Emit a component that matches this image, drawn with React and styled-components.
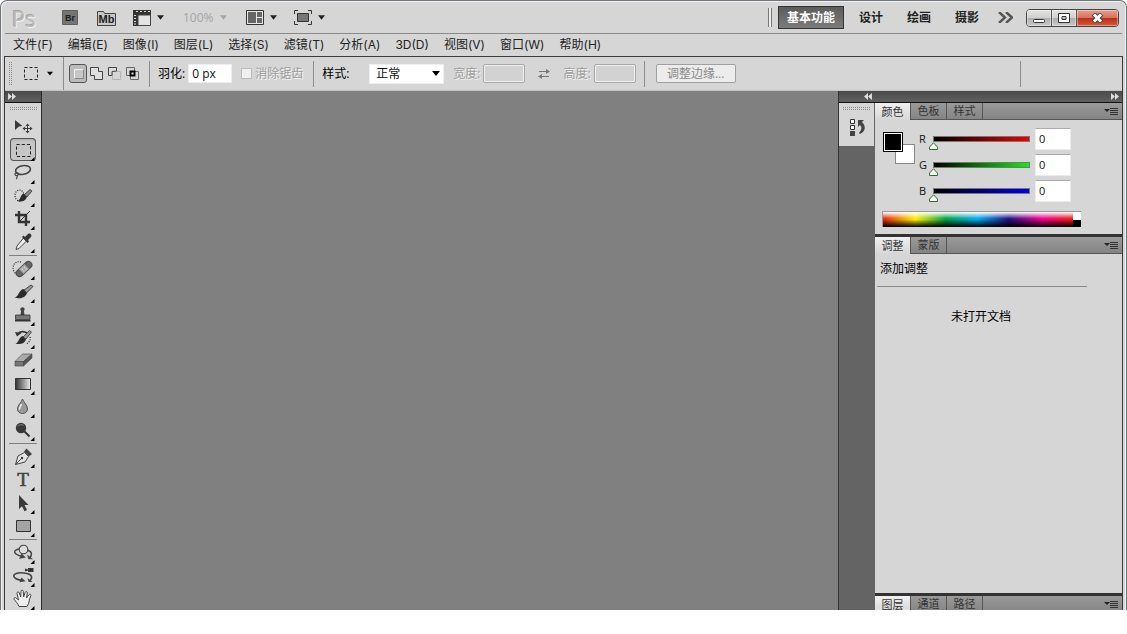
import React, { useState } from 'react';
import styled, { createGlobalStyle, css } from 'styled-components';

const GlobalStyle = createGlobalStyle`
  *, *::before, *::after {
    box-sizing: border-box;
  }
  body {
    margin: 0;
    background: #fff;
    color: #111;
    font-family: "Open Sans", "Noto Sans CJK SC", sans-serif;
    font-size: 12px;
    line-height: 16px;
  }
  button, input, select {
    font: inherit;
    color: inherit;
  }
`;

/* ---------- window frame ---------- */

const Window = styled.div`
  display: flex;
  flex-direction: column;
  height: calc(100vh - 24px);
  overflow: hidden;
  padding: 1px 3px 0;
  background: #d6d6d6;
  border: 1px solid #70747c;
  border-bottom: 0;
  border-radius: 7px 7px 0 0;
  box-shadow: inset 1px 1px 0 #f0f0f0, inset -1px 0 0 #f0f0f0;
`;

const AppBar = styled.header`
  display: flex;
  align-items: center;
  flex: none;
  height: 32px;
  margin: 0 1px;
  padding: 0 3px 0 7px;
  border-bottom: 1px solid #8a8a8a;
`;

const Logo = styled.span`
  width: 50px;
  color: #bcbcbc;
  font-size: 22px;
  line-height: 28px;
  text-shadow: 1px 1px 0 #f2f2f2, -1px -1px 0 #a4a4a4;
`;

const BarButton = styled.button`
  display: flex;
  align-items: center;
  gap: 6px;
  margin: 0 ${(p) => p.$space || 18}px 0 0;
  padding: 0;
  border: 0;
  background: none;
  color: ${(p) => (p.disabled ? '#a4a4a4' : '#333')};
`;

const Spacer = styled.div`
  flex: 1;
`;

const DoubleRule = styled.span`
  width: 4px;
  height: 19px;
  margin-right: 6px;
  border: 1px solid #777;
  border-width: 0 1px;
  background: #eee;
`;

const Workspaces = styled.div`
  display: flex;
  gap: 6px;
  margin-right: 10px;
`;

const Workspace = styled.button`
  height: 23px;
  padding: 0 8px;
  border: 1px solid transparent;
  background: none;
  color: #222;
  font-weight: bold;
  ${(p) => p.$active && css`
    border-color: #333;
    background: linear-gradient(#5c5c5c, #7c7c7c);
    color: #fff;
  `}
`;

const WindowControls = styled.div`
  display: flex;
  height: 18px;
  margin-left: 12px;
  border: 1px solid #444;
  border-radius: 4px;
  overflow: hidden;
`;

const ControlButton = styled.button`
  display: grid;
  place-items: center;
  width: ${(p) => (p.$close ? 41 : 25)}px;
  padding: 0;
  border: 0;
  border-right: ${(p) => (p.$close ? 0 : '1px solid #555')};
  background: ${(p) => (p.$close
    ? 'linear-gradient(#e6a08c 0%, #d8725a 48%, #bc3018 52%, #d4583a 100%)'
    : 'linear-gradient(#e4e4e4 0%, #cfcfcf 48%, #aeaeae 52%, #c8c8c8 100%)')};
  box-shadow: inset 0 0 0 1px rgba(255, 255, 255, 0.4);
`;

const MenuBar = styled.nav`
  display: flex;
  align-items: center;
  flex: none;
  gap: 15px;
  height: 22px;
  padding: 0 9px;
  font-family: Inter, "Noto Sans CJK SC", sans-serif;
`;

const MenuLink = styled.a`
  color: #222;
  text-decoration: none;
  white-space: nowrap;
`;

const Main = styled.div`
  display: flex;
  flex-direction: column;
  flex: 1;
  min-height: 0;
  border: 1px solid #3c3c3c;
  border-bottom: 0;
`;

/* ---------- options bar ---------- */

const OptionsBar = styled.div`
  display: flex;
  align-items: center;
  flex: none;
  height: 34px;
  padding-left: 4px;
  border-bottom: 1px solid #c4c4c4;
  white-space: nowrap;
`;

const Grip = styled.span`
  flex: none;
  background:
    repeating-linear-gradient(90deg, transparent 0 1px, #d6d6d6 1px 2px),
    repeating-linear-gradient(#8c8c8c 0 1px, #d6d6d6 1px 2px);
  ${(p) => (p.$vertical
    ? 'width: 3px; height: 23px; margin-right: 11px;'
    : 'width: 27px; height: 3px; margin: 4px auto 5px;')}
`;

const PresetButton = styled(BarButton)`
  gap: 8px;
  margin-right: 10px;
`;

const Rule = styled.span`
  flex: none;
  width: 1px;
  height: ${(p) => (p.$full ? 33 : 26)}px;
  margin: 0 ${(p) => p.$after || 8}px 0 0;
  background: #8c8c8c;
`;

const ModeGroup = styled.div`
  display: flex;
  align-items: center;
  margin-right: 8px;
`;

const ModeButton = styled.button`
  display: grid;
  place-items: center;
  width: 18px;
  height: 19px;
  padding: 0;
  border: 1px solid ${(p) => (p.$active ? '#555' : 'transparent')};
  border-radius: 3px;
  background: ${(p) => (p.$active ? '#bcbcbc' : 'none')};
`;

const FieldLabel = styled.label`
  margin-right: ${(p) => p.$after || 3}px;
  color: ${(p) => (p.$off ? '#9c9c9c' : '#000')};
  text-shadow: ${(p) => (p.$off ? '1px 1px 0 #f4f4f4' : 'none')};
`;

const Field = styled.input`
  width: ${(p) => p.$width || 44}px;
  height: 19px;
  margin: 0 ${(p) => p.$after || 0}px 0 0;
  padding: 0 3px;
  border: 1px solid #eee;
  background: #fff;
  &:disabled {
    border-color: #a8a8a8;
    border-radius: 2px;
    background: #d2d2d2;
    box-shadow: inset 0 0 0 1px #f0f0f0;
  }
`;

const Check = styled.input`
  appearance: none;
  width: 11px;
  height: 11px;
  margin: 0 3px 0 0;
  border: 1px solid #bbb;
  background: #f0f0f0;
`;

const SelectBox = styled.span`
  position: relative;
  display: flex;
  align-items: center;
  margin-right: 9px;
  svg {
    position: absolute;
    right: 4px;
    pointer-events: none;
  }
`;

const Select = styled.select`
  appearance: none;
  width: 75px;
  height: 20px;
  padding: 0 6px;
  border: 1px solid #eee;
  border-radius: 0;
  background: #fff;
`;

const SwapButton = styled(BarButton)`
  margin: 0 13px;
`;

const RefineButton = styled.button`
  width: 80px;
  height: 19px;
  padding: 0;
  border: 1px solid #a0a0a0;
  border-radius: 2px;
  background: #ececec;
  color: #8a8a8a;
  line-height: 16px;
`;

/* ---------- body ---------- */

const Body = styled.div`
  display: flex;
  flex: 1;
  min-height: 0;
`;

const DarkStrip = styled.div`
  display: flex;
  align-items: center;
  flex: none;
  height: 12px;
  padding: 0 3px;
  border-bottom: 1px solid #111;
  background: linear-gradient(#4a4a4a, #606060);
`;

const Toolbox = styled.aside`
  display: flex;
  flex-direction: column;
  flex: none;
  width: 37px;
  border-right: 1px solid #2c2c2c;
  overflow: hidden;
`;

const ToolButton = styled.button`
  position: relative;
  flex: none;
  width: 26px;
  height: 23px;
  margin: 0 auto;
  padding: 0;
  border: 0;
  border-radius: 4px;
  background: none;
  color: #3a3a3a;
  ${(p) => p.$active && css`
    background: #c6c6c6;
    box-shadow: inset 0 0 0 1px #555, inset 0 2px 2px #aaa;
  `}
  svg {
    display: block;
  }
`;

const ToolRule = styled.hr`
  flex: none;
  width: 28px;
  height: 1px;
  margin: 2px auto 1px;
  border: 0;
  background: #808080;
`;

const Canvas = styled.main`
  flex: 1;
  background: #808080;
`;

const Dock = styled.aside`
  display: flex;
  flex-direction: column;
  flex: none;
  width: 284px;
  border-left: 1px solid #333;
`;

const DockStrip = styled(DarkStrip)`
  justify-content: space-between;
  padding-left: 25px;
`;

const DockBody = styled.div`
  display: flex;
  flex: 1;
  min-height: 0;
`;

const IconColumn = styled.div`
  flex: none;
  width: 36px;
  padding-right: 1px;
  background: #646464;
`;

const IconTile = styled.div`
  display: flex;
  flex-direction: column;
  align-items: center;
  gap: 4px;
  height: 43px;
  background: #d6d6d6;
  button {
    margin: 0;
  }
`;

const Panels = styled.div`
  display: flex;
  flex-direction: column;
  flex: 1;
  min-width: 0;
  gap: 3px;
  background: #333;
  overflow: hidden;
`;

const Panel = styled.section`
  flex: ${(p) => (p.$grow ? 1 : 'none')};
  height: ${(p) => (p.$height ? `${p.$height}px` : 'auto')};
  min-height: 0;
  overflow: hidden;
  background: #d6d6d6;
`;

const Tabs = styled.div`
  display: flex;
  height: 17px;
  border-bottom: 1px solid #555;
  background: linear-gradient(#9a9a9a, #848484);
`;

const Tab = styled.button`
  width: 36px;
  height: ${(p) => (p.$active ? 17 : 16)}px;
  padding: 0;
  border: 0;
  border-right: 1px solid #555;
  background: ${(p) => (p.$active ? 'linear-gradient(#f0f0f0, #d6d6d6)' : 'none')};
  color: #333;
  font-size: 11px;
  line-height: 16px;
`;

const PanelMenu = styled.button`
  display: flex;
  align-items: center;
  margin-left: auto;
  padding: 0 3px 0 0;
  border: 0;
  background: none;
`;

const ColorBody = styled.div`
  display: grid;
  grid-template-columns: 32px 1fr;
  column-gap: 4px;
  padding: 8px 41px 0 8px;
`;

const Swatches = styled.div`
  position: relative;
  width: 32px;
  height: 32px;
  margin-top: 4px;
`;

const Swatch = styled.button`
  position: absolute;
  width: 20px;
  height: 20px;
  padding: 0;
  ${(p) => (p.$front
    ? 'top: 0; left: 0; background: #000; border: 1px solid #000; box-shadow: inset 0 0 0 1px #fff;'
    : 'right: 0; bottom: 0; background: #fff; border: 1px solid #888;')}
`;

const Channels = styled.div`
  display: flex;
  flex-direction: column;
  gap: 4px;
`;

const Channel = styled.div`
  display: grid;
  grid-template-columns: 10px 105px 36px;
  align-items: center;
  justify-content: start;
  height: 22px;
  label {
    font-size: 11px;
    line-height: 22px;
  }
`;

const thumb = "url(\"data:image/svg+xml,%3Csvg xmlns='http://www.w3.org/2000/svg' width='9' height='8'%3E%3Cpath d='M4.5 .8L8.400 5V7.500H.6V5z' fill='white' stroke='%23287028'/%3E%3C/svg%3E\")";

const Range = styled.input`
  appearance: none;
  width: 105px;
  height: 22px;
  margin: 0;
  background:
    linear-gradient(to right, #000, ${(p) => p.$color}) 5px 9px / 95px 4px no-repeat,
    linear-gradient(#777, #777) 4px 8px / 97px 6px no-repeat;
  &::-webkit-slider-runnable-track {
    height: 22px;
  }
  &::-webkit-slider-thumb {
    appearance: none;
    width: 9px;
    height: 8px;
    margin-top: 14px;
    background: ${thumb};
  }
`;

const ChannelValue = styled.input`
  width: 36px;
  height: 22px;
  margin-left: 1px;
  padding: 0 3px 2px;
  border: 1px solid #ececec;
  border-top-color: #aaa;
  background: #fff;
  font-size: 11px;
`;

const Spectrum = styled.div`
  display: grid;
  grid-template-columns: 1fr 8px;
  height: 16px;
  margin: 9px 41px 0 7px;
  border: 1px solid #999;
  border-width: 1px 0 0 1px;
`;

const Hues = styled.div`
  background:
    linear-gradient(#fff 0%, rgba(255, 255, 255, 0) 45%, rgba(0, 0, 0, 0) 50%, #000 100%),
    linear-gradient(to right, #e02010, #fff000 17%, #00a040 33%, #00a8f0 50%, #201080 66%, #f00088 84%, #e82010);
`;

const BlackWhite = styled.div`
  background: linear-gradient(#fff 50%, #000 50%);
`;

const AdjustTitle = styled.h2`
  margin: 0 35px 0 2px;
  padding: 6px 3px 9px;
  border-bottom: 1px solid #8a8a8a;
  color: #000;
  font-size: 12px;
  font-weight: normal;
  line-height: 17px;
`;

const EmptyNote = styled.p`
  margin: 22px 35px 0 0;
  color: #000;
  text-align: center;
`;

/* ---------- drawings ---------- */

const Caret = ({ color = '#222', size = 7 }) => (
  <svg width={size} height="5" viewBox="0 0 8 5"><path d="M0 0h8L4 5z" fill={color} /></svg>
);

const Chevrons = ({ left }) => (
  <svg width="8" height="7" viewBox="0 0 8 7">
    <path d={left ? 'M4 0v7L0 3.5zM8 0v7L4 3.5z' : 'M0 0v7l4-3.5zM4 0v7l4-3.5z'} fill="#ddd" />
  </svg>
);

const AppBadge = ({ text, folder }) => (
  <svg width={folder ? 19 : 16} height="16">
    {folder
      ? <path d="M.5 1.500h6l1 2h11v12H.5z" fill="#c8c8c8" stroke="#444" />
      : <path d="M.5.5h15v14H.5z" fill="#757575" stroke="#606060" />}
    <text x={folder ? 9.5 : 8} y={folder ? 13 : 11} textAnchor="middle" fontFamily="Liberation Sans" fontWeight="bold" fontSize={folder ? 11 : 9} fill="#1c1c1c">{text}</text>
  </svg>
);

const FilmIcon = () => (
  <svg width="18" height="16">
    <path d="M0 0h18v5H5v11H0z" fill="#333" />
    <path d="M5 5h12.500v10.500H5z" fill="#e4e4e4" stroke="#444" />
    <path d="M3 1.500h2M7 1.500h2M11 1.500h2M15 1.500h2M1 5.500h2M1 8.500h2M1 11.500h2M1 14h2" stroke="#ddd" />
  </svg>
);

const ArrangeIcon = () => (
  <svg width="18" height="16">
    <path d="M.5.5h17v14H.5z" fill="#e8e8e8" stroke="#333" />
    <path d="M2 2h8v11H2zM11 2h5v5h-5zM11 8h5v5h-5z" fill="#666" />
  </svg>
);

const ScreenIcon = () => (
  <svg width="18" height="16">
    <path d="M.5 4V.5H4M14 .5h3.500V4M17.500 11v3.500H14M4 14.500H.5V11" fill="none" stroke="#333" />
    <path d="M3.500 3.500h11v8h-11z" fill="#777" stroke="#333" />
  </svg>
);

const SwapIcon = () => (
  <svg width="12" height="12">
    <path d="M1 3.500h8M11 8.500H3" stroke="#777" />
    <path d="M8 1l4 2.500L8 6zM4 6L0 8.500 4 11z" fill="#777" />
  </svg>
);

const MenuIcon = () => (
  <svg width="15" height="9">
    <path d="M0 2h6L3 5z" fill="#222" />
    <path d="M6 1.500h8M6 3.500h8M6 5.500h8M6 7.500h8" stroke="#333" />
  </svg>
);

const HistoryPanelIcon = () => (
  <svg width="16" height="18">
    <path d="M1.500.5h4v4h-4zM1.500 6.500h4v4h-4z" fill="#fff" stroke="#333" />
    <path d="M1 12h5v5H1z" fill="#444" />
    <path d="M9 1h6l-2 2c4 4 4 9-2 12l-1-1c3-4 3-6 1-8L9 8z" fill="#444" />
  </svg>
);

const modes = [
  <g key="n"><path d="M2 2h9v9H2z" fill="#f0f0f0" /><path d="M3 3h9v9H3z" fill="#888" /><path d="M3 3h8v8H3z" fill="#c8c8c8" /></g>,
  <path key="a" d="M.5.5h8v4h4v8h-8v-4h-4z" fill="#e0e0e0" stroke="#444" />,
  <g key="s" fill="none"><path d="M4.500 4.500h8v8h-8z" stroke="#b4b4b4" /><path d="M8.500 4V.5h-8v8H4V4.500z" fill="#ddd" stroke="#444" /></g>,
  <g key="i" fill="none" stroke="#666"><path d="M.5.5h8v8h-8zM4.500 4.500h8v8h-8z" /><path d="M4.500 4.500h4v4h-4z" stroke="#000" strokeWidth="2" fill="#ddd" /></g>
];

const dotted = { fill: 'none', stroke: '#222', strokeWidth: 1.2, strokeDasharray: '1 1.3' };

const drawings = {
  move: (
    <g>
      <path d="M5 5l7.500 6-3.500.5L5 15z" fill="currentColor" />
      <path d="M17.500 9v9M13 13.500h9" stroke="currentColor" />
      <path d="M17.500 8.500l-2 2.500h4zM17.500 18.500l-2-2.500h4zM12.500 13.500l2.500-2v4zM22.500 13.500l-2.500-2v4z" fill="currentColor" />
    </g>
  ),
  marquee: <path d="M6.500 6.500h14v12h-14z" fill="none" stroke="#222" strokeDasharray="3.200 2" />,
  lasso: (
    <g fill="none" stroke="#444" strokeWidth="1.600">
      <ellipse cx="13" cy="9" rx="7.500" ry="4.300" transform="rotate(-10 13 9)" />
      <path d="M7 12c-3-.5-2.500 3 0 2.500s1.800-2.600-.4-2.800M7 14.500c.8 1.400.2 2.500-.8 3.500" strokeWidth="1.200" />
    </g>
  ),
  quick: (
    <g>
      <ellipse cx="9.500" cy="11.500" rx="4.500" ry="5.500" {...dotted} />
      <path d="M20 5.500l2 1.500-5 6-3-2z" fill="#888" stroke="#333" strokeWidth=".8" />
      <path d="M13.500 9.500l3.500 3.500c-1.500 4-5.500 5.500-9.500 4 3-.5 2.500-6 6-7.500z" fill="#2c2c2c" />
    </g>
  ),
  crop: (
    <g fill="none" stroke="#333">
      <path d="M9 4v11h11M5 8h11v11" strokeWidth="2.400" />
      <path d="M9 15L20 4" />
    </g>
  ),
  eyedropper: (
    <g>
      <path d="M13.500 8l3 3-7.500 7.500-3 1 1-3.500z" fill="#eee" stroke="#444" />
      <path d="M12 7l1.500-1.500L15 7l3-3c2-1.500 4.500 1 3 3l-3 3 1 1.500-1.500 1.500z" fill="#333" />
    </g>
  ),
  heal: (
    <g>
      <path d="M11 5c-9-2-10 9-4.500 12" {...dotted} />
      <g transform="rotate(-43 14 12)">
        <rect x="4.500" y="8.500" width="19" height="7" rx="3.500" fill="#666" stroke="#444" />
        <path d="M10 8.500h8v7h-8z" fill="#aaa" stroke="#555" strokeWidth=".7" />
        <path d="M12 11h1M15 11h1M12 13.500h1M15 13.500h1" stroke="#eee" />
      </g>
    </g>
  ),
  brush: (
    <g>
      <path d="M21 5l2 1.500-6.500 6.500-3-2.500z" fill="#999" stroke="#333" strokeWidth=".9" />
      <path d="M13.500 9l3.500 4c-1.500 4.500-7 6.500-12.500 4.500 4.500-.8 4-7.500 9-8.500z" fill="#2c2c2c" />
    </g>
  ),
  stamp: (
    <g fill="#444" stroke="#333" strokeWidth=".8">
      <path d="M11 12l.5-4C8.500 3.500 16.500 3.500 13.500 8l.5 4z" />
      <path d="M5.500 12h14.500v4.500H5.500z" fill="#777" />
      <path d="M5 17h15.500v1.500H5z" fill="#333" stroke="none" />
    </g>
  ),
  history: (
    <g>
      <path d="M8 8c2-3 6-3 9-1" fill="none" stroke="#333" strokeWidth="1.800" />
      <path d="M5 6l6.500 1L7 10.500z" fill="#333" />
      <path d="M19.500 4.500l2 1.500-5.500 7-3-2z" fill="#999" stroke="#333" strokeWidth=".8" />
      <path d="M12.500 10l3.500 3.500c-1.500 4-5.500 5.500-10.500 4 3.500-.7 3-6 7-7.500z" fill="#2c2c2c" />
      <path d="M20 11c1 3-1 6-4 7" {...dotted} />
    </g>
  ),
  eraser: (
    <g stroke="#444" strokeWidth=".6" strokeLinejoin="round">
      <path d="M12.500 5H22l-8.500 7.500H5z" fill="#aaa" />
      <path d="M5 12.500h8.500V17H5z" fill="#777" />
      <path d="M13.500 12.500L22 5v4l-8.500 8z" fill="#555" />
    </g>
  ),
  gradient: (
    <g>
      <defs>
        <linearGradient id="toolGradient"><stop stopColor="#333" /><stop offset="1" stopColor="#eee" /></linearGradient>
      </defs>
      <path d="M5.500 6.500h15v11h-15z" fill="url(#toolGradient)" stroke="#333" />
    </g>
  ),
  blur: (
    <g>
      <path d="M12.500 4c1.500 4 5 6 5 10 0 6-10 6-10 0 0-4 3.800-6 5-10z" fill="#999" stroke="#555" />
      <path d="M11.500 9c-.5 2-2 3-2 5.500" fill="none" stroke="#eee" strokeWidth="1.500" />
    </g>
  ),
  dodge: (
    <g>
      <path d="M13.500 12.500l6 6" stroke="#333" strokeWidth="2" />
      <circle cx="11" cy="10" r="5.200" fill="#383838" />
      <path d="M8 8.500c1-2 4-2.500 5.500-1" fill="none" stroke="#888" />
    </g>
  ),
  pen: (
    <g>
      <path d="M5.500 19.500L8 11l6.500-3.500 4 4L15 17z" fill="#e4e4e4" stroke="#444" />
      <path d="M5.500 19.500l6-6" stroke="#444" />
      <circle cx="12" cy="13" r="1.200" fill="#333" />
      <path d="M14 6.500l2.500-3L22 9l-3 2.500z" fill="#444" />
    </g>
  ),
  type: <text x="13" y="18" textAnchor="middle" fontFamily="Liberation Serif" fontSize="19" fill="#444" stroke="#444" strokeWidth=".6">T</text>,
  path: <path d="M9 4l9.500 10h-4l2.500 5-2.500 1.200-2.500-5L9 18z" fill="#3a3a3a" />,
  shape: <path d="M6.500 6.500h14v11h-14z" fill="#a4a4a4" stroke="#333" />,
  rotate3d: (
    <g fill="none" stroke="#444" strokeWidth="1.500">
      <path d="M9 8c-6 1-6.500 5 3 7.500M17 9c5.500 1.500 5.500 5 2.500 8" />
      <path d="M11.500 12.500l4 4-6 1zM17.500 14l1 4h4z" fill="#444" strokeWidth=".4" />
      <circle cx="13.500" cy="8.500" r="4.300" fill="#ddd" strokeWidth="1.100" />
    </g>
  ),
  camera3d: (
    <g>
      <path d="M17 9.500C8 7.500 1.500 10 4.500 13.500c1.500 2 5 2.500 8 3M17 9.500c5 1 6 4.500 2.500 7.500" fill="none" stroke="#444" strokeWidth="1.600" />
      <path d="M11.500 13.500l4 3.800-6 1zM17.500 14l1 4h4z" fill="#444" />
      <path d="M15 4.500l3 1V4h5.500v4H18V6.500l-3 1z" fill="#333" />
    </g>
  ),
  hand: (
    <path
      d="M9 19.500c-1-3-3.500-5-4.800-7.200-.8-1.600 1-2.300 2-1.200L8.500 13 7 6.500c-.3-1.800 1.800-2.200 2.300-.6L10.700 10 11 4.500c0-1.800 2.200-1.800 2.300 0l.3 5.500 1.500-4.500c.6-1.600 2.600-1 2.200.6L16.500 11l2.300-3.200c1-1.300 2.600-.3 2 1-1.500 3-1.300 7-3.800 10.700z"
      fill="#eee" stroke="#444" strokeLinejoin="round"
    />
  )
};

const ToolDrawing = ({ name, corner }) => (
  <svg width="26" height="23">
    {drawings[name]}
    {corner && <path d="M24.500 19v4h-4z" fill="#000" />}
  </svg>
);

const menus = ['文件(F)', '编辑(E)', '图像(I)', '图层(L)', '选择(S)', '滤镜(T)', '分析(A)', '3D(D)', '视图(V)', '窗口(W)', '帮助(H)'];

const toolGroups = [
  ['move', 'marquee', 'lasso', 'quick', 'crop', 'eyedropper'],
  ['heal', 'brush', 'stamp', 'history', 'eraser', 'gradient', 'blur', 'dodge'],
  ['pen', 'type', 'path', 'shape'],
  ['rotate3d', 'camera3d', 'hand']
];

const channels = [
  { name: 'R', color: '#f00000' },
  { name: 'G', color: '#10f010' },
  { name: 'B', color: '#0000f0' }
];

const TabRow = ({ names }) => (
  <Tabs role="tablist">
    {names.map((name, i) => (
      <Tab key={name} role="tab" aria-selected={i === 0} $active={i === 0}>{name}</Tab>
    ))}
    <PanelMenu aria-label="panel menu"><MenuIcon /></PanelMenu>
  </Tabs>
);

const TopBar = () => {
  const [active, setActive] = useState('基本功能');
  return (
    <AppBar>
      <Logo>Ps</Logo>
      <BarButton aria-label="Bridge" $space={19}><AppBadge text="Br" /></BarButton>
      <BarButton aria-label="Mini Bridge" $space={17}><AppBadge text="Mb" folder /></BarButton>
      <BarButton aria-label="view extras" $space={19}><FilmIcon /><Caret /></BarButton>
      <BarButton disabled $space={19}>100% <Caret color="#a4a4a4" /></BarButton>
      <BarButton aria-label="arrange" $space={17}><ArrangeIcon /><Caret /></BarButton>
      <BarButton aria-label="screen mode"><ScreenIcon /><Caret /></BarButton>
      <Spacer />
      <DoubleRule />
      <Workspaces>
        {['基本功能', '设计', '绘画', '摄影'].map((name) => (
          <Workspace key={name} $active={name === active} onClick={() => setActive(name)}>{name}</Workspace>
        ))}
      </Workspaces>
      <BarButton aria-label="more" $space={1}>
        <svg width="15" height="11"><path d="M1 0l6 5.500L1 11M8 0l6 5.500L8 11" fill="none" stroke="#555" strokeWidth="2.400" /></svg>
      </BarButton>
      <WindowControls>
        <ControlButton aria-label="minimize">
          <svg width="12" height="12"><rect x=".5" y="7.500" width="11" height="3" rx="1" fill="#fff" stroke="#333" /></svg>
        </ControlButton>
        <ControlButton aria-label="maximize">
          <svg width="12" height="10"><path d="M.5.5h11v9H.5zM4 3.500h4v3H4z" fill="#fff" fillRule="evenodd" stroke="#333" /></svg>
        </ControlButton>
        <ControlButton aria-label="close" $close>
          <svg width="13" height="10">
            <path d="M2.500 1l8 8M10.500 1l-8 8" stroke="#444" strokeWidth="5" />
            <path d="M3 1.500l7 7M10 1.500l-7 7" stroke="#fff" strokeWidth="3" />
          </svg>
        </ControlButton>
      </WindowControls>
    </AppBar>
  );
};

const Options = () => {
  const [mode, setMode] = useState(0);
  return (
    <OptionsBar>
      <Grip $vertical />
      <PresetButton aria-label="tool preset">
        <svg width="16" height="14"><path d="M1.500.5h13v12h-13z" fill="none" stroke="#222" strokeDasharray="3 2" /></svg>
        <Caret color="#000" size={6} />
      </PresetButton>
      <Rule $full $after={5} />
      <ModeGroup>
        {modes.map((drawing, i) => (
          <ModeButton key={i} aria-label={`mode ${i + 1}`} $active={i === mode} onClick={() => setMode(i)}>
            <svg width="13" height="13">{drawing}</svg>
          </ModeButton>
        ))}
      </ModeGroup>
      <Rule />
      <FieldLabel htmlFor="feather">羽化:</FieldLabel>
      <Field id="feather" defaultValue="0 px" $after={9} />
      <Check id="antialias" type="checkbox" disabled />
      <FieldLabel htmlFor="antialias" $off $after={10}>消除锯齿</FieldLabel>
      <Rule />
      <FieldLabel htmlFor="style" $after={20}>样式:</FieldLabel>
      <SelectBox>
        <Select id="style"><option>正常</option></Select>
        <Caret color="#000" size={8} />
      </SelectBox>
      <FieldLabel htmlFor="width" $off>宽度:</FieldLabel>
      <Field id="width" disabled $width={42} />
      <SwapButton aria-label="swap" disabled><SwapIcon /></SwapButton>
      <FieldLabel htmlFor="height" $off>高度:</FieldLabel>
      <Field id="height" disabled $width={42} $after={8} />
      <Rule $after={11} />
      <RefineButton disabled>调整边缘...</RefineButton>
      <Spacer />
      <Rule $after={101} />
    </OptionsBar>
  );
};

const Tools = () => {
  const [tool, setTool] = useState('marquee');
  return (
    <Toolbox>
      <DarkStrip><Chevrons /></DarkStrip>
      <Grip />
      {toolGroups.map((group, g) => (
        <React.Fragment key={g}>
          {g > 0 && <ToolRule />}
          {group.map((name) => (
            <ToolButton key={name} aria-label={name} $active={name === tool} onClick={() => setTool(name)}>
              <ToolDrawing name={name} corner={name !== 'move'} />
            </ToolButton>
          ))}
        </React.Fragment>
      ))}
    </Toolbox>
  );
};

const ColorPanel = () => {
  const [values, setValues] = useState([0, 0, 0]);
  const change = (i) => (e) => {
    const next = [...values];
    next[i] = Number(e.target.value) || 0;
    setValues(next);
  };
  return (
    <Panel $height={131}>
      <TabRow names={['颜色', '色板', '样式']} />
      <ColorBody>
        <Swatches>
          <Swatch aria-label="background color" />
          <Swatch aria-label="foreground color" $front />
        </Swatches>
        <Channels>
          {channels.map((c, i) => (
            <Channel key={c.name}>
              <label htmlFor={`value${c.name}`}>{c.name}</label>
              <Range type="range" min="0" max="255" aria-label={c.name} $color={c.color} value={values[i]} onChange={change(i)} />
              <ChannelValue id={`value${c.name}`} value={values[i]} onChange={change(i)} />
            </Channel>
          ))}
        </Channels>
      </ColorBody>
      <Spectrum><Hues /><BlackWhite /></Spectrum>
    </Panel>
  );
};

const App = () => (
  <>
    <GlobalStyle />
    <Window>
      <TopBar />
      <MenuBar>
        {menus.map((name) => <MenuLink key={name} href="#">{name}</MenuLink>)}
      </MenuBar>
      <Main>
        <Options />
        <Body>
          <Tools />
          <Canvas />
          <Dock>
            <DockStrip><Chevrons left /><Chevrons /></DockStrip>
            <DockBody>
              <IconColumn>
                <IconTile>
                  <Grip />
                  <BarButton aria-label="history"><HistoryPanelIcon /></BarButton>
                </IconTile>
              </IconColumn>
              <Panels>
                <ColorPanel />
                <Panel $grow>
                  <TabRow names={['调整', '蒙版']} />
                  <AdjustTitle>添加调整</AdjustTitle>
                  <EmptyNote>未打开文档</EmptyNote>
                </Panel>
                <Panel $height={14}>
                  <TabRow names={['图层', '通道', '路径']} />
                </Panel>
              </Panels>
            </DockBody>
          </Dock>
        </Body>
      </Main>
    </Window>
  </>
);

export default App;
